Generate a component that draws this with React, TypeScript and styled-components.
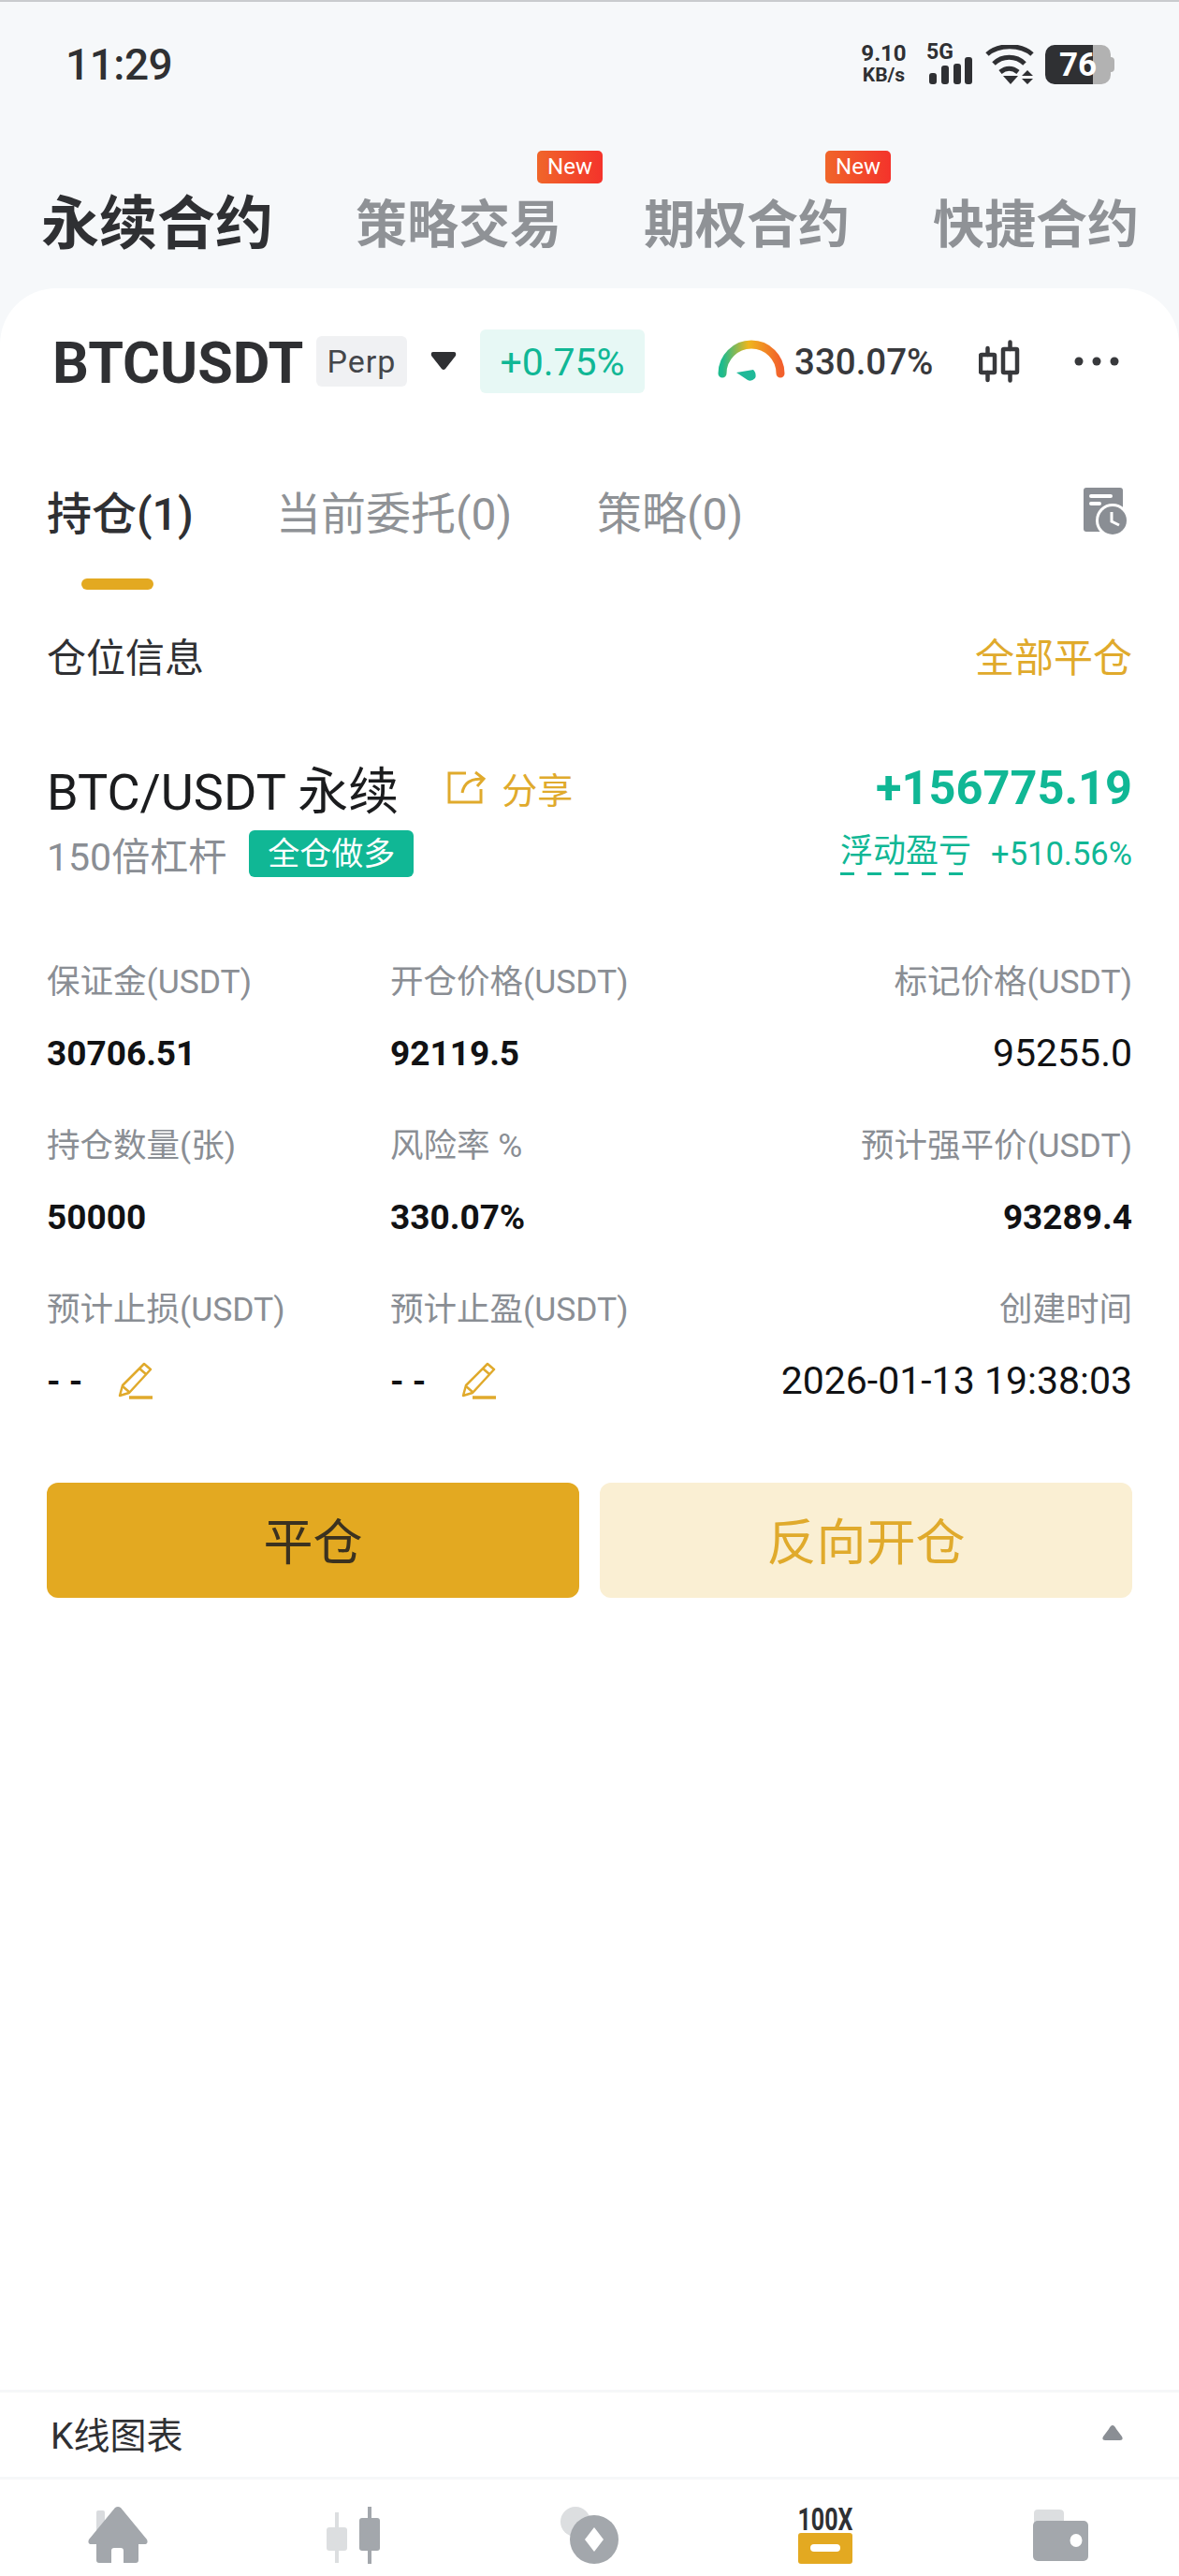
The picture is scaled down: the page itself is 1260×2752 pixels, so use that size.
import * as React from 'react';
import styled, { createGlobalStyle } from 'styled-components';

const GlobalStyle = createGlobalStyle`
  html, body {
    margin: 0;
    padding: 0;
    background: #fff;
  }
  * {
    box-sizing: border-box;
  }
`;

const FONT = `Roboto, "Noto Sans CJK SC", sans-serif`;
const GOLD = '#e3a921';
const GOLD_TEXT = '#e0aa2c';
const GREEN = '#10b795';
const GREY = '#8a8e94';
const DARK = '#2f3033';

const Page = styled.div`
  width: 1260px;
  height: 2752px;
  display: flex;
  flex-direction: column;
  background: #f6f8fa;
  border-top: 2px solid #c9cbce;
  font-family: ${FONT};
  overflow: hidden;
`;

const StatusBar = styled.div`
  height: 118px;
  flex: none;
  display: flex;
  align-items: center;
  justify-content: space-between;
  padding: 16px 73px 0 70px;
`;

const Time = styled.div`
  font-size: 46px;
  font-weight: 500;
  color: ${DARK};
  letter-spacing: -0.5px;
`;

const StatusIcons = styled.div`
  display: flex;
  align-items: center;
`;

const Speed = styled.div`
  display: flex;
  flex-direction: column;
  align-items: center;
  width: 49px;
  font-size: 24px;
  line-height: 23px;
  font-weight: 700;
  color: ${DARK};
  margin-right: 21px;
  white-space: nowrap;
`;

const SpeedUnit = styled.span`
  font-size: 21px;
`;

const Network = styled.div`
  position: relative;
  width: 50px;
  height: 42px;
  margin-right: 13px;
`;

const NetworkLabel = styled.span`
  position: absolute;
  left: 0;
  top: -4px;
  font-size: 23px;
  line-height: 24px;
  font-weight: 700;
  color: ${DARK};
`;

const Battery = styled.div`
  position: relative;
  width: 70px;
  height: 42px;
  margin-left: 12px;
  border-radius: 10px;
  background: linear-gradient(90deg, #2f3033 0 73%, #b2b2b2 73% 100%);
  display: flex;
  align-items: center;
  padding-left: 15px;
  font-size: 35px;
  font-weight: 700;
  color: #fff;

  &::after {
    content: '';
    position: absolute;
    right: -4px;
    top: 13px;
    width: 4px;
    height: 16px;
    border-radius: 0 4px 4px 0;
    background: #b2b2b2;
  }
`;

const ProductTabs = styled.div`
  height: 188px;
  flex: none;
  display: flex;
  align-items: flex-start;
  padding: 88px 0 0 44px;
`;

const ProductTab = styled.div<{ $active?: boolean; $width: number }>`
  position: relative;
  flex: none;
  width: ${(p) => p.$width}px;
  font-size: ${(p) => (p.$active ? 62 : 55)}px;
  line-height: 64px;
  font-weight: 700;
  color: ${(p) => (p.$active ? DARK : '#8f9296')};
  white-space: nowrap;
`;

const NewBadge = styled.span`
  position: absolute;
  left: 194px;
  top: -47px;
  width: 70px;
  height: 35px;
  border-radius: 5px;
  background: linear-gradient(90deg, #f0662a, #f4332b);
  color: #fff;
  font-size: 24px;
  line-height: 35px;
  font-weight: 400;
  text-align: center;
`;

const Card = styled.div`
  flex: 1;
  display: flex;
  flex-direction: column;
  background: #fff;
  border-radius: 60px 60px 0 0;
  min-height: 0;
`;

const SymbolBar = styled.div`
  height: 112px;
  flex: none;
  display: flex;
  align-items: center;
  padding: 0 0 0 56px;
  margin-top: 22px;
`;

const Symbol = styled.div`
  font-size: 61px;
  font-weight: 700;
  color: ${DARK};
  width: 282px;
  padding-top: 4px;
`;

const PerpChip = styled.div`
  width: 97px;
  height: 54px;
  border-radius: 6px;
  background: #f0f1f3;
  color: #44464a;
  font-size: 34px;
  line-height: 54px;
  text-align: center;
  letter-spacing: 1px;
`;

const DropArrow = styled.svg`
  width: 28px;
  height: 20px;
  margin: 0 25px 0 25px;
  flex: none;
`;

const ChangeChip = styled.div`
  width: 176px;
  height: 68px;
  border-radius: 6px;
  background: #e7f8f5;
  color: ${GREEN};
  font-size: 41px;
  line-height: 70px;
  text-align: center;
`;

const Gauge = styled.svg`
  width: 72px;
  height: 46px;
  margin-left: 78px;
  flex: none;
`;

const RiskRate = styled.div`
  font-size: 38.500px;
  font-weight: 500;
  color: #38393c;
  margin-left: 10px;
  width: 197px;
`;

const IconSlot = styled.svg<{ $gap: number }>`
  flex: none;
  margin-left: ${(p) => p.$gap}px;
`;

const OrderTabs = styled.div`
  height: 92px;
  flex: none;
  margin-top: 57px;
  display: flex;
  align-items: center;
  padding: 0 50px;
`;

const OrderTab = styled.div<{ $active?: boolean; $width: number }>`
  flex: none;
  width: ${(p) => p.$width}px;
  font-size: 48px;
  font-weight: ${(p) => (p.$active ? 500 : 400)};
  color: ${(p) => (p.$active ? DARK : '#8f9296')};
  white-space: nowrap;
`;

const HistoryIcon = styled.svg`
  margin: 2px 4px 0 auto;
  flex: none;
`;

const Indicator = styled.div`
  width: 77px;
  height: 12px;
  margin: 27px 0 0 87px;
  border-radius: 6px;
  background: ${GOLD};
  flex: none;
`;

const SectionRow = styled.div`
  display: flex;
  justify-content: space-between;
  align-items: center;
  padding: 0 50px;
  margin-top: 44px;
  height: 50px;
  flex: none;
`;

const SectionTitle = styled.div<{ $gold?: boolean }>`
  font-size: 42px;
  color: ${(p) => (p.$gold ? GOLD_TEXT : DARK)};
`;

const PositionHead = styled.div`
  display: flex;
  justify-content: space-between;
  align-items: center;
  padding: 0 50px;
  margin-top: 86px;
  height: 62px;
  flex: none;
`;

const PositionName = styled.div`
  display: flex;
  align-items: center;
  font-size: 54px;
  color: #1b1c1e;
  white-space: nowrap;
`;

const ShareIcon = styled.svg`
  margin: 0 16px 0 52px;
  flex: none;
`;

const ShareText = styled.span`
  font-size: 38px;
  color: ${GOLD_TEXT};
`;

const Pnl = styled.div`
  font-size: 50.500px;
  font-weight: 700;
  color: ${GREEN};
`;

const PositionSub = styled.div`
  display: flex;
  justify-content: space-between;
  align-items: center;
  padding: 0 50px;
  margin-top: 15px;
  height: 50px;
  flex: none;
`;

const Leverage = styled.div`
  display: flex;
  align-items: center;
  font-size: 41px;
  color: ${GREY};
`;

const MarginChip = styled.span`
  width: 176px;
  height: 50px;
  margin-left: 24px;
  border-radius: 6px;
  background: ${GREEN};
  color: #fff;
  font-size: 34px;
  line-height: 50px;
  text-align: center;
`;

const PnlNote = styled.div`
  display: flex;
  align-items: center;
  color: ${GREEN};
`;

const PnlLabel = styled.span`
  font-size: 35px;
  line-height: 42px;
  padding-bottom: 4px;
  background: repeating-linear-gradient(90deg, ${GREEN} 0 15px, transparent 15px 29px) left bottom / 100% 3px no-repeat;
`;

const PnlRate = styled.span`
  font-size: 34.500px;
  margin-left: 21px;
`;

const FieldGrid = styled.div`
  display: grid;
  grid-template-columns: 367px 1fr auto;
  grid-auto-rows: 175px;
  padding: 0 50px;
  margin-top: 90px;
  flex: none;
`;

const Field = styled.div<{ $right?: boolean }>`
  display: flex;
  flex-direction: column;
  gap: 32px;
  align-items: ${(p) => (p.$right ? 'flex-end' : 'flex-start')};
`;

const FieldLabel = styled.div`
  font-size: 35.500px;
  line-height: 44px;
  color: ${GREY};
`;

const FieldValue = styled.div<{ $bold?: boolean }>`
  display: flex;
  align-items: center;
  height: 44px;
  font-size: ${(p) => (p.$bold ? 37 : 41)}px;
  font-weight: ${(p) => (p.$bold ? 700 : 400)};
  color: #111214;
  white-space: nowrap;
`;

const EditIcon = styled.svg`
  margin-left: 38px;
  flex: none;
`;

const Actions = styled.div`
  display: grid;
  grid-template-columns: 1fr 1fr;
  gap: 22px;
  padding: 0 50px;
  margin-top: 32px;
  flex: none;
`;

const ActionButton = styled.div<{ $primary?: boolean }>`
  height: 123px;
  border-radius: 12px;
  background: ${(p) => (p.$primary ? GOLD : '#faefd3')};
  color: ${(p) => (p.$primary ? '#3b3220' : GOLD_TEXT)};
  font-size: 53px;
  line-height: 130px;
  text-align: center;
`;

const Spacer = styled.div`
  flex: 1;
`;

const ChartRow = styled.div`
  height: 96px;
  flex: none;
  display: flex;
  align-items: center;
  justify-content: space-between;
  padding: 0 60px 4px 54px;
  border-top: 3px solid #f6f7f8;
  border-bottom: 3px solid #f6f7f8;
  font-size: 39px;
  color: ${DARK};
`;

const NavBar = styled.div`
  height: 103px;
  flex: none;
  display: grid;
  grid-template-columns: repeat(5, 1fr);
  align-items: start;
  padding: 29px 0 0 0;
  background: #fff;
`;

const NavItem = styled.div`
  display: flex;
  justify-content: center;
`;

const FIELDS = [
  { label: '保证金(USDT)', value: '30706.51', bold: true },
  { label: '开仓价格(USDT)', value: '92119.5', bold: true },
  { label: '标记价格(USDT)', value: '95255.0', right: true },
  { label: '持仓数量(张)', value: '50000', bold: true },
  { label: '风险率 %', value: '330.07%', bold: true },
  { label: '预计强平价(USDT)', value: '93289.4', bold: true, right: true },
  { label: '预计止损(USDT)', value: '- -', bold: true, edit: true },
  { label: '预计止盈(USDT)', value: '- -', bold: true, edit: true },
  { label: '创建时间', value: '2026-01-13 19:38:03', right: true },
];

const Pencil = () => (
  <EditIcon width="38" height="40" viewBox="0 0 38 40" fill="none" stroke={GOLD_TEXT} strokeWidth="2.500">
    <path d="M28 2 L35 8 L12 33 L2 36 L5 25 Z" strokeLinejoin="round" />
    <path d="M23 7 L30 13 M5 26 L12 32" />
    <path d="M12 38 H37" strokeWidth="3.500" />
  </EditIcon>
);

const App: React.FC = () => (
  <Page>
    <GlobalStyle />
    <StatusBar>
      <Time>11:29</Time>
      <StatusIcons>
        <Speed>
          <span>9.10</span>
          <SpeedUnit>KB/s</SpeedUnit>
        </Speed>
        <Network>
          <NetworkLabel>5G</NetworkLabel>
          <svg width="50" height="42" viewBox="0 0 50 42" fill={DARK}>
            <rect x="3" y="30" width="8" height="12" rx="3" />
            <rect x="16" y="22" width="8" height="20" rx="3" />
            <rect x="29" y="20" width="8" height="22" rx="3" />
            <rect x="41" y="13" width="8" height="29" rx="3" />
          </svg>
        </Network>
        <svg width="52" height="42" viewBox="0 0 52 42" fill="none" stroke={DARK} strokeWidth="5">
          <path d="M2 10 C14 -1 38 -1 50 10" />
          <path d="M9 20 C18 11 33 11 42 20" />
          <path d="M16 29 C22 24 29 24 35 29" />
          <path d="M19 33 H35 L27 42 Z" fill={DARK} stroke="none" />
          <path d="M39 33 L45 27 L51 33 Z M39 36 H51 L45 42 Z" fill={DARK} stroke="none" />
        </svg>
        <Battery>76</Battery>
      </StatusIcons>
    </StatusBar>

    <ProductTabs>
      <ProductTab $active $width={336}>永续合约</ProductTab>
      <ProductTab $width={308}>
        策略交易
        <NewBadge>New</NewBadge>
      </ProductTab>
      <ProductTab $width={309}>
        期权合约
        <NewBadge>New</NewBadge>
      </ProductTab>
      <ProductTab $width={218}>快捷合约</ProductTab>
    </ProductTabs>

    <Card>
      <SymbolBar>
        <Symbol>BTCUSDT</Symbol>
        <PerpChip>Perp</PerpChip>
        <DropArrow viewBox="0 0 28 20" fill={DARK}>
          <path d="M3 0 H25 Q28 0 27 4 L16 18 Q14 20 12 18 L1 4 Q0 0 3 0 Z" />
        </DropArrow>
        <ChangeChip>+0.75%</ChangeChip>
        <Gauge viewBox="0 0 72 46" fill="none">
          <defs>
            <linearGradient id="gaugeArc" x1="0" y1="0" x2="1" y2="0">
              <stop offset="0" stopColor="#1dbb8e" />
              <stop offset="0.45" stopColor="#efb61d" />
              <stop offset="1" stopColor="#f2602c" />
            </linearGradient>
          </defs>
          <path d="M5 36 A31 31 0 0 1 67 36" stroke="url(#gaugeArc)" strokeWidth="9" strokeLinecap="round" />
          <path d="M20 35 L38 32 Q42 36 40 41 Q36 45 32 43 Z" fill="#1fb998" />
        </Gauge>
        <RiskRate>330.07%</RiskRate>
        <IconSlot $gap={0} width="44" height="46" viewBox="0 0 44 46" fill="none" stroke="#38393c" strokeWidth="4.500" strokeLinecap="round">
          <rect x="2" y="16" width="15" height="19" rx="1" />
          <path d="M9.500 9 V16 M9.500 35 V43" />
          <rect x="26" y="10" width="15" height="25" rx="1" />
          <path d="M33.500 2.500 V10 M33.500 35 V43.500" />
        </IconSlot>
        <IconSlot $gap={58} width="48" height="12" viewBox="0 0 48 12" fill="#38393c">
          <circle cx="5" cy="6" r="4.500" />
          <circle cx="24" cy="6" r="4.500" />
          <circle cx="43" cy="6" r="4.500" />
        </IconSlot>
      </SymbolBar>

      <OrderTabs>
        <OrderTab $active $width={245}>持仓(1)</OrderTab>
        <OrderTab $width={343}>当前委托(0)</OrderTab>
        <OrderTab $width={200}>策略(0)</OrderTab>
        <HistoryIcon width="48" height="50" viewBox="0 0 48 50">
          <rect x="0" y="0" width="42" height="47" rx="3" fill={GREY} />
          <path d="M8 9 H29" stroke="#fff" strokeWidth="4" strokeLinecap="round" />
          <path d="M8 17 H17" stroke="#fff" strokeWidth="4" strokeLinecap="round" />
          <circle cx="31" cy="35" r="18" fill="#fff" />
          <circle cx="31" cy="35" r="15" fill={GREY} />
          <path d="M30 26 V36 L38 40" fill="none" stroke="#fff" strokeWidth="3" />
        </HistoryIcon>
      </OrderTabs>
      <Indicator />

      <SectionRow>
        <SectionTitle>仓位信息</SectionTitle>
        <SectionTitle $gold>全部平仓</SectionTitle>
      </SectionRow>

      <PositionHead>
        <PositionName>
          BTC/USDT 永续
          <ShareIcon width="42" height="36" viewBox="0 0 42 36" fill="none" stroke={GOLD_TEXT} strokeWidth="3">
            <path d="M20 3 H2 V34 H36 V20" />
            <path d="M16 24 C18 13 25 9 38 9 M30 2 L39 9 L32 17" />
          </ShareIcon>
          <ShareText>分享</ShareText>
        </PositionName>
        <Pnl>+156775.19</Pnl>
      </PositionHead>

      <PositionSub>
        <Leverage>
          150倍杠杆
          <MarginChip>全仓做多</MarginChip>
        </Leverage>
        <PnlNote>
          <PnlLabel>浮动盈亏</PnlLabel>
          <PnlRate>+510.56%</PnlRate>
        </PnlNote>
      </PositionSub>

      <FieldGrid>
        {FIELDS.map((field) => (
          <Field key={field.label} $right={field.right}>
            <FieldLabel>{field.label}</FieldLabel>
            <FieldValue $bold={field.bold}>
              {field.value}
              {field.edit && <Pencil />}
            </FieldValue>
          </Field>
        ))}
      </FieldGrid>

      <Actions>
        <ActionButton $primary>平仓</ActionButton>
        <ActionButton>反向开仓</ActionButton>
      </Actions>

      <Spacer />

      <ChartRow>
        K线图表
        <svg width="22" height="16" viewBox="0 0 22 16" fill={GREY}>
          <path d="M11 0 Q13 0 15 4 L21 12 Q23 16 19 16 H3 Q-1 16 1 12 L7 4 Q9 0 11 0 Z" />
        </svg>
      </ChartRow>

      <NavBar>
        <NavItem>
          <svg width="64" height="62" viewBox="0 0 64 62">
            <rect x="9" y="4" width="9" height="24" rx="2" fill="#d9dbde" />
            <path d="M29 1 Q32 -1 35 1 L63 35 Q65 40 60 40 H54 V57 Q54 60 51 60 H38 V47 Q38 44 35 44 H28 Q25 44 25 47 V60 H12 Q9 60 9 57 V40 H4 Q-1 40 1 35 Z" fill="#a3a7ac" />
          </svg>
        </NavItem>
        <NavItem>
          <svg width="58" height="62" viewBox="0 0 58 62">
            <path d="M11 6 V60" stroke="#dcdee0" strokeWidth="4" />
            <rect x="0" y="22" width="22" height="25" rx="3" fill="#dcdee0" />
            <path d="M46 0 V61" stroke="#a3a7ac" strokeWidth="4" />
            <rect x="35" y="12" width="22" height="35" rx="3" fill="#a3a7ac" />
          </svg>
        </NavItem>
        <NavItem>
          <svg width="62" height="62" viewBox="0 0 62 62">
            <circle cx="16" cy="16" r="16" fill="#dcdee0" />
            <circle cx="36" cy="35" r="26" fill="#a3a7ac" />
            <path d="M36 22 L46 35 L36 48 L26 35 Z" fill="#fff" />
          </svg>
        </NavItem>
        <NavItem>
          <svg width="60" height="62" viewBox="0 0 60 62">
            <text x="30" y="25" textAnchor="middle" fontFamily="Roboto, sans-serif" fontWeight="700" fontSize="33" textLength="59" lengthAdjust="spacingAndGlyphs" fill={DARK}>100X</text>
            <rect x="1" y="28" width="58" height="33" rx="3" fill={GOLD} />
            <rect x="14" y="40" width="32" height="8" rx="4" fill="#fff" />
          </svg>
        </NavItem>
        <NavItem>
          <svg width="60" height="58" viewBox="0 0 60 58">
            <path d="M1 7 Q1 3 5 3 H28 Q33 3 33 7 V22 H1 Z" fill="#dcdee0" />
            <rect x="0" y="15" width="59" height="43" rx="5" fill="#a3a7ac" />
            <ellipse cx="46" cy="36" rx="6.500" ry="7" fill="#fff" />
          </svg>
        </NavItem>
      </NavBar>
    </Card>
  </Page>
);

export default App;
